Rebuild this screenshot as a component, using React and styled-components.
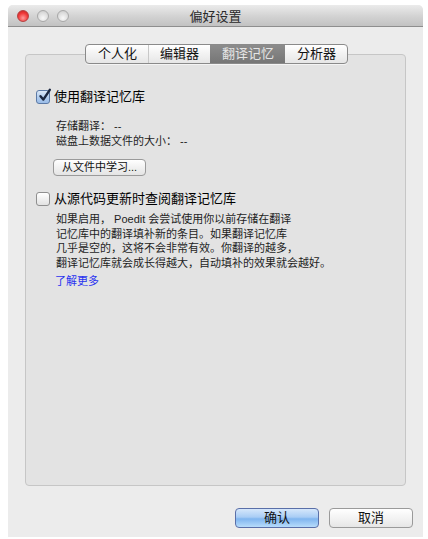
import React from 'react';
import styled, { createGlobalStyle } from 'styled-components';

const GlobalStyle = createGlobalStyle`
  html, body {
    margin: 0;
    padding: 0;
    background: #ffffff;
  }
  body {
    font-family: "Liberation Sans", "Noto Sans CJK SC", sans-serif;
    color: #000;
  }
`;

const Window = styled.div`
  position: relative;
  margin: 5px 0 0 8px;
  width: 415px;
  height: 532px;
  background: #ececec;
  border-radius: 5px 5px 0 0;
  display: flex;
  flex-direction: column;
  box-sizing: border-box;
  overflow: hidden;
`;

const TitleBar = styled.div`
  position: relative;
  height: 22px;
  flex: none;
  box-sizing: border-box;
  background: linear-gradient(#ebebeb, #d2d2d2 55%, #c2c2c2);
  border-bottom: 1px solid #8e8e8e;
  display: flex;
  align-items: center;
  justify-content: center;
  font-size: 13px;
  color: #2a2a2a;
`;

const Lights = styled.div`
  position: absolute;
  left: 9px;
  top: 5px;
  display: flex;
  gap: 8px;
`;

const Light = styled.span`
  width: 12px;
  height: 12px;
  border-radius: 50%;
  box-sizing: border-box;
  border: 1px solid ${p => (p.red ? '#b54040' : '#a8a8a8')};
  background: ${p =>
    p.red
      ? 'radial-gradient(circle at 50% 70%, #ff9a9a, #f03a3a 55%, #c02020)'
      : 'radial-gradient(circle at 50% 70%, #f8f8f8, #dcdcdc 60%, #c4c4c4)'};
`;

const Body = styled.div`
  flex: 1;
  display: flex;
  flex-direction: column;
  padding: 17px 17px 0 17px;
  min-height: 0;
`;

const TabRow = styled.div`
  position: relative;
  z-index: 2;
  display: flex;
  justify-content: center;
  margin-bottom: -10px;
  padding-left: 2px;
`;

const TabGroup = styled.div`
  display: flex;
  height: 20px;
  box-sizing: border-box;
  border: 1px solid #8a8a8a;
  border-radius: 4px;
  overflow: hidden;
  background: linear-gradient(#ffffff, #f2f2f2 50%, #e6e6e6);
  box-shadow: 0 1px 0 rgba(255, 255, 255, 0.6);
`;

const Tab = styled.div`
  padding: 0 11px;
  font-size: 13px;
  line-height: 18px;
  color: ${p => (p.active ? '#e6e6e6' : '#111')};
  background: ${p => (p.active ? 'linear-gradient(#8c8c8c, #767676)' : 'transparent')};
  border-left: 1px solid ${p => (p.sep ? '#c8c8c8' : 'transparent')};
  white-space: nowrap;
`;

const Panel = styled.div`
  flex: 1;
  background: #e3e3e3;
  border: 1px solid #c6c6c6;
  border-radius: 4px;
  padding: 34px 10px 0 10px;
  display: flex;
  flex-direction: column;
  align-items: flex-start;
`;

const CheckRow = styled.label`
  display: flex;
  align-items: center;
  gap: 4px;
  height: 16px;
  font-size: 13px;
  line-height: 16px;
  margin-top: ${p => p.mt || 0}px;
`;

const Box = styled.span`
  width: 14px;
  height: 14px;
  flex: none;
  box-sizing: border-box;
  border: 1px solid ${p => (p.checked ? '#5c7aa6' : '#8f8f8f')};
  border-radius: 3px;
  background: ${p =>
    p.checked
      ? 'linear-gradient(#dce9f8, #b2cdee 50%, #9bbde8)'
      : 'linear-gradient(#ffffff, #f0f0f0 50%, #e2e2e2)'};
  position: relative;
  overflow: visible;

  svg {
    position: absolute;
    left: 1px;
    top: -3px;
  }
`;

const Info = styled.div`
  margin: 14px 0 0 20px;
  font-size: 11px;
  line-height: 15px;
  color: #1e1e1e;
`;

const SmallButton = styled.button`
  margin: 10px 0 0 17px;
  height: 17px;
  width: 93px;
  padding: 0;
  font-family: inherit;
  font-size: 11px;
  line-height: 15px;
  color: #111;
  border: 1px solid #9a9a9a;
  border-radius: 4px;
  background: linear-gradient(#ffffff, #f1f1f1 50%, #e4e4e4);
`;

const Paragraph = styled.div`
  margin: 5px 0 0 20px;
  font-size: 11px;
  line-height: 14.5px;
  color: #1e1e1e;
`;

const MoreLink = styled.a`
  margin: 4px 0 0 19px;
  font-size: 11px;
  line-height: 14px;
  color: #2a33f0;
  text-decoration: none;
`;

const Footer = styled.div`
  flex: none;
  display: flex;
  justify-content: flex-end;
  gap: 10px;
  padding: 22px 10px 9px 0;
`;

const DialogButton = styled.button`
  width: 84px;
  height: 20px;
  padding: 0;
  font-family: inherit;
  font-size: 13px;
  line-height: 18px;
  color: #111;
  border-radius: 4px;
  border: 1px solid ${p => (p.primary ? '#5a6fa8' : '#9a9a9a')};
  background: ${p =>
    p.primary
      ? 'linear-gradient(#d6e7fb, #a9cdf5 45%, #80b5ef 55%, #b7dcfb)'
      : 'linear-gradient(#ffffff, #f3f3f3 50%, #e6e6e6)'};
`;

function Check({ checked }) {
  return (
    <Box checked={checked}>
      {checked && (
        <svg width="14" height="15" viewBox="0 0 14 15">
          <path d="M2.5 8.2 L5.3 11.6 L11.8 1.8" fill="none" stroke="#1b2740" strokeWidth="2.4" strokeLinecap="round" strokeLinejoin="round" />
        </svg>
      )}
    </Box>
  );
}

export default function App() {
  return (
    <>
      <GlobalStyle />
      <Window>
        <TitleBar>
          <Lights>
            <Light red />
            <Light />
            <Light />
          </Lights>
          偏好设置
        </TitleBar>
        <Body>
          <TabRow>
            <TabGroup>
              <Tab>个人化</Tab>
              <Tab sep>编辑器</Tab>
              <Tab active>翻译记忆</Tab>
              <Tab>分析器</Tab>
            </TabGroup>
          </TabRow>
          <Panel>
            <CheckRow>
              <Check checked />
              使用翻译记忆库
            </CheckRow>
            <Info>
              存储翻译： --
              <br />
              磁盘上数据文件的大小： --
            </Info>
            <SmallButton>从文件中学习...</SmallButton>
            <CheckRow mt={15}>
              <Check />
              从源代码更新时查阅翻译记忆库
            </CheckRow>
            <Paragraph>
              如果启用， Poedit 会尝试使用你以前存储在翻译
              <br />
              记忆库中的翻译填补新的条目。如果翻译记忆库
              <br />
              几乎是空的，这将不会非常有效。你翻译的越多，
              <br />
              翻译记忆库就会成长得越大，自动填补的效果就会越好。
            </Paragraph>
            <MoreLink href="#">了解更多</MoreLink>
          </Panel>
        </Body>
        <Footer>
          <DialogButton primary>确认</DialogButton>
          <DialogButton>取消</DialogButton>
        </Footer>
      </Window>
    </>
  );
}
